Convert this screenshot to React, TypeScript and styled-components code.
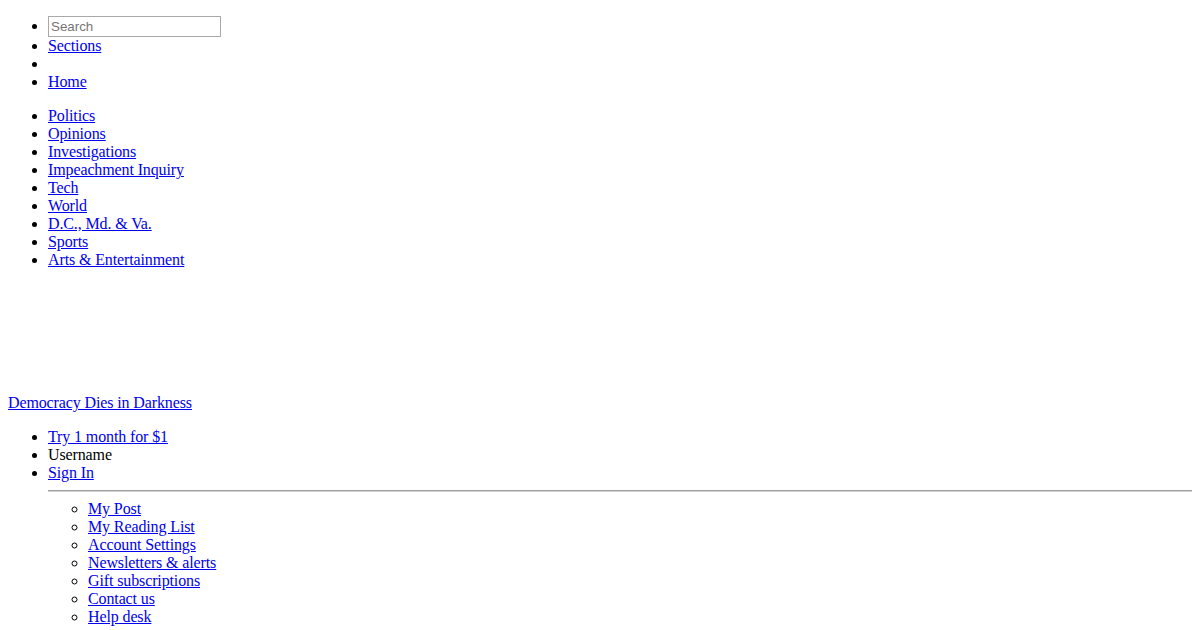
import { FC } from 'react';
import styled, { createGlobalStyle } from 'styled-components';

const sections: string[] = [
  'Politics',
  'Opinions',
  'Investigations',
  'Impeachment Inquiry',
  'Tech',
  'World',
  'D.C., Md. & Va.',
  'Sports',
  'Arts & Entertainment',
];

const accountLinks: string[] = [
  'My Post',
  'My Reading List',
  'Account Settings',
  'Newsletters & alerts',
  'Gift subscriptions',
  'Contact us',
  'Help desk',
];

const App: FC = () => {
  return (
    <>
      <GlobalStyle />
      <header>
        <NavList>
          <Item>
            <SearchInput type="text" placeholder="Search" />
          </Item>
          <Item>
            <Link href="#">Sections</Link>
          </Item>
          <Item />
          <Item>
            <Link href="#">Home</Link>
          </Item>
        </NavList>

        <NavList>
          {sections.map((name) => (
            <Item key={name}>
              <Link href="#">{name}</Link>
            </Item>
          ))}
        </NavList>

        <Masthead>
          <LogoSlot aria-hidden="true" />
          <Link href="#">Democracy Dies in Darkness</Link>
        </Masthead>

        <NavList>
          <Item>
            <Link href="#">Try 1 month for $1</Link>
          </Item>
          <Item>Username</Item>
          <Item>
            <Link href="#">Sign In</Link>
            <Divider />
            <SubList>
              {accountLinks.map((name) => (
                <Item key={name}>
                  <Link href="#">{name}</Link>
                </Item>
              ))}
            </SubList>
          </Item>
        </NavList>
      </header>
    </>
  );
};

export default App;

const GlobalStyle = createGlobalStyle`
  body {
    margin: 0 8px 8px;
    background: #ffffff;
    color: #000000;
    font-family: "Liberation Serif", "Times New Roman", serif;
    font-size: 16px;
    letter-spacing: -0.12px;
  }
`;

const NavList = styled.ul`
  margin: 16px 0;
  padding-left: 40px;
  list-style: disc;
`;

const SubList = styled.ul`
  margin: 0;
  padding-left: 40px;
  list-style: circle;
`;

const Item = styled.li`
  display: list-item;
`;

const Link = styled.a`
  color: #0000ee;
  text-decoration: underline;
`;

const SearchInput = styled.input`
  box-sizing: border-box;
  width: 173px;
  height: 21px;
  padding: 1px 2px;
  border: 1px solid #a9a9a9;
  font-family: "Liberation Sans", Arial, sans-serif;
  font-size: 13.333px;
  letter-spacing: 0;
  color: #000000;

  &::placeholder {
    color: #757575;
  }
`;

const Masthead = styled.div`
  display: block;
`;

const LogoSlot = styled.div`
  height: 109px;
`;

const Divider = styled.hr`
  margin: 8px 0;
  border: none;
  border-top: 1px solid #a0a0a0;
  border-bottom: 1px solid #d0d0d0;
`;
